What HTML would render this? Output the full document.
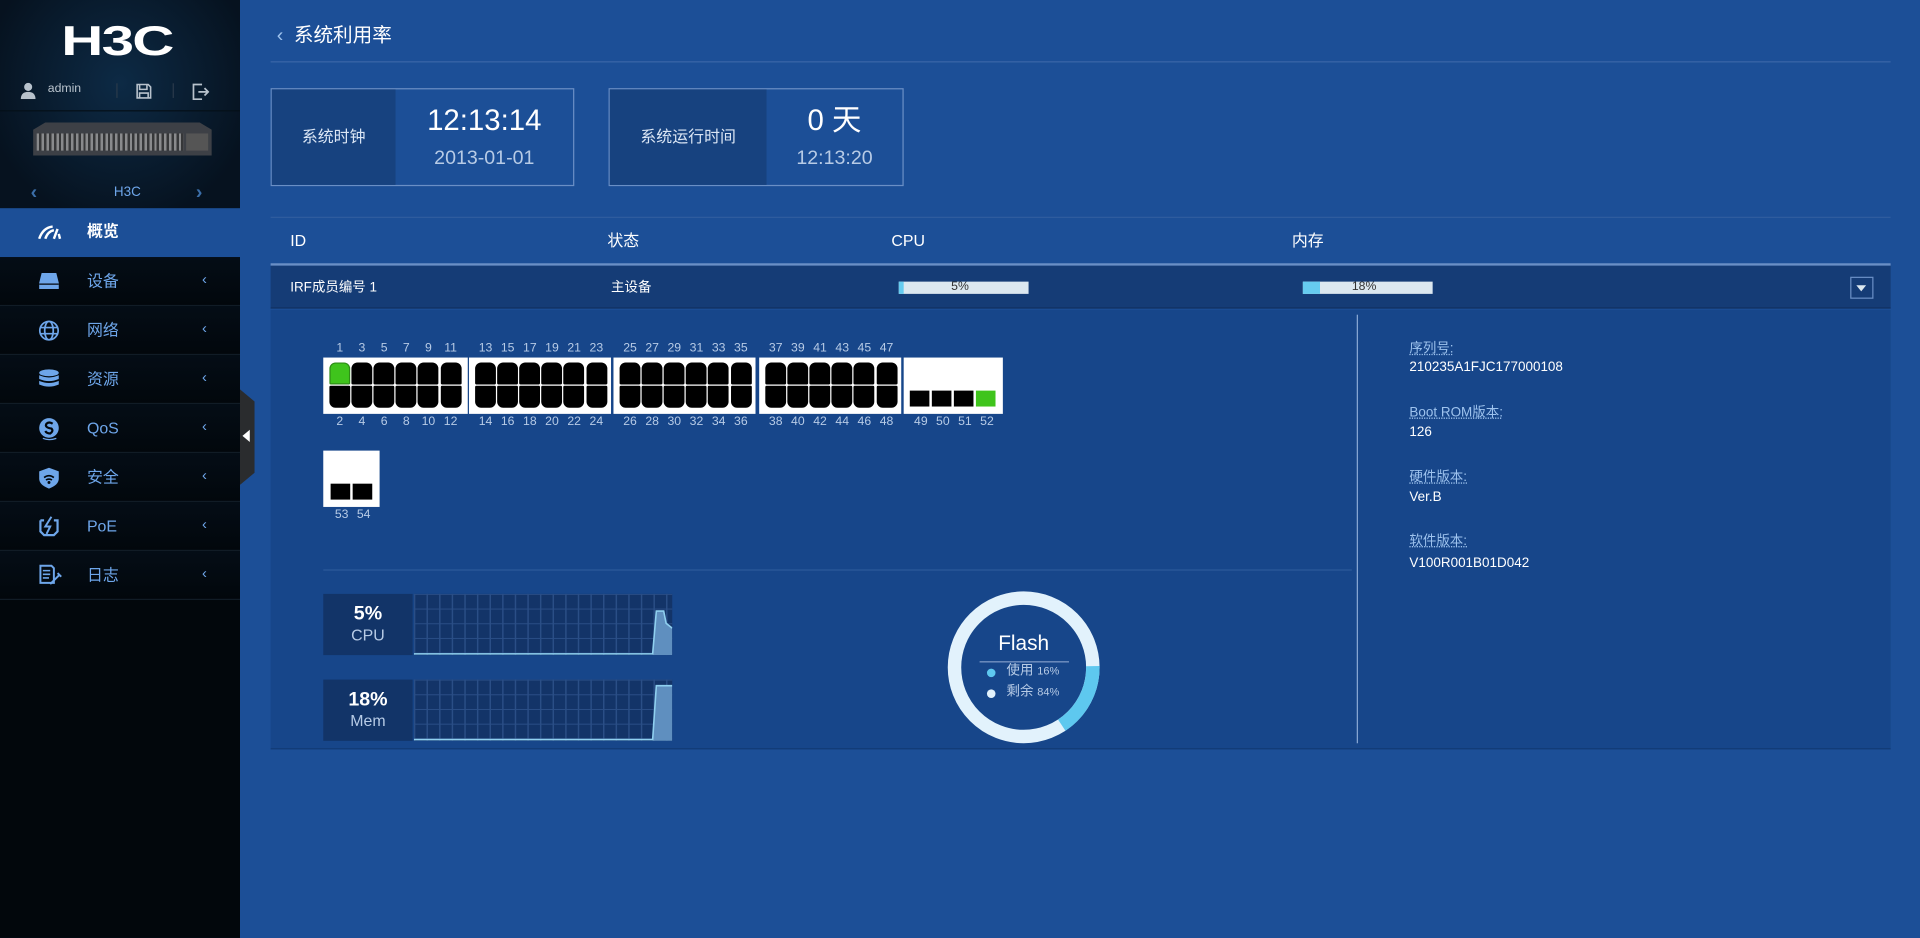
<!DOCTYPE html>
<html><head><meta charset="utf-8">
<style>
*{margin:0;padding:0;box-sizing:border-box}
html,body{width:1920px;height:938px;overflow:hidden;background:#1c4f97}
body{font-family:"Liberation Sans","Noto Sans CJK SC",sans-serif;color:#fff;line-height:1.2}
#w{position:absolute;left:0;top:0;width:1568px;height:766px;transform:scale(1.22449);transform-origin:0 0;background:#1c4f97}
.a{position:absolute}
#side{left:0;top:0;width:196px;height:766px;background:#02070c}
#top{left:0;top:0;width:196px;height:170px;background:radial-gradient(ellipse at 50% 40%,#0d2a45,#06121f 80%)}
.nav{position:absolute;left:0;width:196px;height:40px;border-bottom:1px solid #111c26;color:#6ea6ea;font-size:13px;background:linear-gradient(#040d16,#02070c)}
.nav .t{position:absolute;left:71px;top:12px}
.nav .c{position:absolute;left:165px;top:11px;font-size:12px}
.nav svg{position:absolute;left:31px;top:11px}
.card{border:1px solid #6a8fc5}
.lbl{color:#9ec3ee;font-size:11px;text-decoration:underline dotted}
.val{font-size:11px;color:#fff}
.blk{position:absolute;top:292px;height:46px;background:#fff;padding:4px 0 0 5px}
.p{position:absolute;width:17px;height:18px;background:#000;border-radius:5px 5px 1px 1px}
.p.b{border-radius:1px 1px 5px 5px}
.num{position:absolute;font-size:10px;color:#b7cbe6;width:18px;text-align:center}
.grid{background-color:#133468;background-image:linear-gradient(#2a4e86 1px,transparent 1px),linear-gradient(90deg,#2a4e86 1px,transparent 1px);background-size:10.3px 12px}
</style></head><body><div id="w">
<div id="side" class="a"></div>
<div id="top" class="a">
 <div class="a" style="left:50px;top:14px;font-size:34px;font-weight:bold;letter-spacing:-1px;transform:scaleX(1.4);transform-origin:0 0;line-height:40px">H3C</div>
 <svg class="a" style="left:16px;top:67px" width="14" height="14" viewBox="0 0 14 14"><circle cx="7" cy="4" r="3.3" fill="#b8c2cc"/><path d="M1 14 Q1 8 7 8 Q13 8 13 14Z" fill="#b8c2cc"/></svg>
 <div class="a" style="left:39px;top:67px;font-size:10px;color:#b8c2cc">admin</div>
 <div class="a" style="left:95px;top:68px;width:1px;height:12px;background:#2a3a4a"></div>
 <div class="a" style="left:141px;top:68px;width:1px;height:12px;background:#2a3a4a"></div>
 <svg class="a" style="left:111px;top:68px" width="13" height="13" viewBox="0 0 13 13"><path d="M1 1H10L12 3V12H1Z M3 1V5H9V1 M3 12V8H10V12" fill="none" stroke="#b8c2cc" stroke-width="1.3"/></svg>
 <svg class="a" style="left:157px;top:68px" width="14" height="14" viewBox="0 0 14 14"><path d="M8 1H1V13H8 M5 7H13 M10 4L13 7L10 10" fill="none" stroke="#b8c2cc" stroke-width="1.4"/></svg>
 <div class="a" style="left:27px;top:100px;width:146px;height:27px;background:#3d4046;clip-path:polygon(10px 0,136px 0,146px 6px,146px 27px,0 27px,0 6px)"></div>
 <div class="a" style="left:30px;top:109px;width:120px;height:14px;background:repeating-linear-gradient(90deg,#aaa 0 2px,#333 2px 4px);opacity:.7"></div>
 <div class="a" style="left:152px;top:109px;width:18px;height:14px;background:#555"></div>
 <div class="a" style="left:25px;top:148px;font-size:16px;color:#3b6ea8;font-weight:bold">&#8249;</div>
 <div class="a" style="left:160px;top:148px;font-size:16px;color:#3b6ea8;font-weight:bold">&#8250;</div>
 <div class="a" style="left:93px;top:151px;font-size:11px;color:#6ea6ea">H3C</div>
</div>
<div class="a" style="left:0;top:90px;width:196px;height:1px;background:#051019"></div>
<div class="a" style="left:0;top:170px;width:196px;height:40px;background:#1c4f97">
 <svg class="a" style="left:31px;top:13px" width="20" height="14" viewBox="0 0 20 14"><path d="M1 12Q4 3 12 2 M6 12Q8 6 13 5 M13 12L16 4 M18 12L17 8" fill="none" stroke="#fff" stroke-width="2"/></svg>
 <div class="a" style="left:71px;top:11px;font-size:13px;font-weight:bold">概览</div>
</div>
<div class="nav" style="top:210px"><svg width="18" height="16" viewBox="0 0 18 16"><path d="M3 2H15L17 10V15H1V10Z" fill="#6ea6ea"/><path d="M1 11H17" stroke="#02070c" stroke-width="1"/></svg><span class="t">设备</span><span class="c">&#8249;</span></div>
<div class="nav" style="top:250px"><svg width="18" height="18" viewBox="0 0 18 18"><g fill="none" stroke="#6ea6ea" stroke-width="1.4"><circle cx="9" cy="9" r="7.5"/><ellipse cx="9" cy="9" rx="3.5" ry="7.5"/><path d="M1.5 6.5H16.5M1.5 11.5H16.5"/></g></svg><span class="t">网络</span><span class="c">&#8249;</span></div>
<div class="nav" style="top:290px"><svg width="18" height="18" viewBox="0 0 18 18"><g fill="#6ea6ea"><ellipse cx="9" cy="3.5" rx="8" ry="2.8"/><path d="M1 5.5Q9 9 17 5.5V8.5Q9 12 1 8.5Z M1 10Q9 13.5 17 10V13Q9 16.5 1 13Z"/></g></svg><span class="t">资源</span><span class="c">&#8249;</span></div>
<div class="nav" style="top:330px"><svg width="18" height="19" viewBox="0 0 18 19"><circle cx="9" cy="8.5" r="8" fill="#6ea6ea"/><path d="M12 5Q9 3 7 5Q5 8 11 9Q13 11 10 13Q7 13 6 11" fill="none" stroke="#02070c" stroke-width="1.8"/><path d="M4 17Q9 19 15 17" stroke="#6ea6ea" fill="none"/></svg><span class="t">QoS</span><span class="c">&#8249;</span></div>
<div class="nav" style="top:370px"><svg width="18" height="19" viewBox="0 0 18 19"><path d="M9 1L17 4V10Q17 15 9 18Q1 15 1 10V4Z" fill="#6ea6ea"/><path d="M5 9Q9 6 13 9M6.5 11Q9 9.5 11.5 11" stroke="#02070c" fill="none" stroke-width="1.3"/><circle cx="9" cy="13" r="1.2" fill="#02070c"/></svg><span class="t">安全</span><span class="c">&#8249;</span></div>
<div class="nav" style="top:410px"><svg width="18" height="18" viewBox="0 0 18 18"><path d="M2 4H5M13 4H16V13L13 16H5L2 13V4" fill="none" stroke="#6ea6ea" stroke-width="1.8"/><path d="M11 1L6 9H10L7 15" fill="none" stroke="#6ea6ea" stroke-width="1.6"/></svg><span class="t">PoE</span><span class="c">&#8249;</span></div>
<div class="nav" style="top:450px"><svg width="20" height="18" viewBox="0 0 20 18"><path d="M2 1H11L13 3V15H2Z" fill="none" stroke="#6ea6ea" stroke-width="1.6"/><path d="M4 5H10M4 8H10M4 11H9" stroke="#6ea6ea" stroke-width="1.3"/><path d="M10 16L17 9M16 7L19 10" stroke="#6ea6ea" stroke-width="1.6"/></svg><span class="t">日志</span><span class="c">&#8249;</span></div>
<div class="a" style="left:196px;top:318px;width:12px;height:78px;background:#2a2c2e;clip-path:polygon(0 0,100% 10px,100% 68px,0 100%)"></div>
<div class="a" style="left:198px;top:351px;width:0;height:0;border-top:5px solid transparent;border-bottom:5px solid transparent;border-right:6px solid #fff"></div>

<div class="a" style="left:226px;top:20px;font-size:16px;color:#9ec3ee">&#8249;</div>
<div class="a" style="left:240px;top:20px;font-size:16px">系统利用率</div>
<div class="a" style="left:221px;top:50px;width:1323px;height:1px;background:#3a66a8"></div>

<div class="a card" style="left:221px;top:72px;width:248px;height:80px">
 <div class="a" style="left:0;top:0;width:101px;height:78px;background:#17427f;font-size:13px;color:#dbe6f5;text-align:center;line-height:78px">系统时钟</div>
 <div class="a" style="left:101px;top:12px;width:145px;text-align:center;font-size:24px">12:13:14</div>
 <div class="a" style="left:101px;top:47px;width:145px;text-align:center;font-size:16px;color:#b7cbe6">2013-01-01</div>
</div>
<div class="a card" style="left:497px;top:72px;width:241px;height:80px">
 <div class="a" style="left:0;top:0;width:128px;height:78px;background:#17427f;font-size:13px;color:#dbe6f5;text-align:center;line-height:78px">系统运行时间</div>
 <div class="a" style="left:128px;top:12px;width:111px;text-align:center;font-size:24px">0 天</div>
 <div class="a" style="left:128px;top:47px;width:111px;text-align:center;font-size:16px;color:#b7cbe6">12:13:20</div>
</div>

<div class="a" style="left:221px;top:177px;width:1323px;height:1px;background:#2f5d9f"></div>
<div class="a" style="left:237px;top:189px;font-size:13px">ID</div>
<div class="a" style="left:496px;top:189px;font-size:13px">状态</div>
<div class="a" style="left:728px;top:189px;font-size:13px">CPU</div>
<div class="a" style="left:1055px;top:189px;font-size:13px">内存</div>
<div class="a" style="left:221px;top:215px;width:1323px;height:2px;background:#6a8fc5"></div>
<div class="a" style="left:221px;top:217px;width:1323px;height:35px;background:#153c76;border-bottom:1px solid #123060"></div>
<div class="a" style="left:237px;top:229px;font-size:11px">IRF成员编号 1</div>
<div class="a" style="left:499px;top:229px;font-size:11px">主设备</div>
<div class="a" style="left:734px;top:230px;width:106px;height:10px;background:#dce8f0"><div style="width:4px;height:10px;background:#66ccf0"></div><div class="a" style="left:0;top:-1px;width:100px;text-align:center;font-size:10px;color:#333;line-height:12px">5%</div></div>
<div class="a" style="left:1064px;top:230px;width:106px;height:10px;background:#dce8f0"><div style="width:14px;height:10px;background:#66ccf0"></div><div class="a" style="left:0;top:-1px;width:100px;text-align:center;font-size:10px;color:#333;line-height:12px">18%</div></div>
<div class="a" style="left:1511px;top:226px;width:19px;height:18px;border:1px solid #6a8fc5"></div>
<div class="a" style="left:1516px;top:233px;border-left:4px solid transparent;border-right:4px solid transparent;border-top:5px solid #dce8f0"></div>

<div class="a" style="left:221px;top:253px;width:1323px;height:359px;background:#17468a;border-bottom:1px solid #123a74"></div>
<div class="a" style="left:1108px;top:257px;width:1px;height:350px;background:#8aa9d4"></div>
<div class="a" style="left:264px;top:465px;width:840px;height:1px;background:#2c5a9a"></div>
<div id="ports"></div>

<div class="a" style="left:264px;top:485px;width:73px;height:50px;background:#123468;text-align:center"><div style="font-size:16px;font-weight:bold;margin-top:7px">5%</div><div style="font-size:13px;color:#b7cbe6">CPU</div></div>
<div class="a grid" style="left:338px;top:485px;width:211px;height:50px"></div>
<svg class="a" style="left:338px;top:485px" width="211" height="50"><path d="M195 50L198 14H204L206 24L211 28V50Z" fill="#5f8fbf"/><path d="M0 49H195L198 14H204L206 24L211 28" fill="none" stroke="#8fd0f0" stroke-width="1.3"/></svg>
<div class="a" style="left:264px;top:555px;width:73px;height:50px;background:#123468;text-align:center"><div style="font-size:16px;font-weight:bold;margin-top:7px">18%</div><div style="font-size:13px;color:#b7cbe6">Mem</div></div>
<div class="a grid" style="left:338px;top:555px;width:211px;height:50px"></div>
<svg class="a" style="left:338px;top:555px" width="211" height="50"><path d="M195 50L198 5H211V50Z" fill="#5f8fbf"/><path d="M0 49H195L198 5H211" fill="none" stroke="#8fd0f0" stroke-width="1.3"/></svg>

<svg class="a" style="left:772px;top:481px" width="128" height="128" viewBox="0 0 128 128"><circle cx="64" cy="64" r="56.5" fill="none" stroke="#e2f2fc" stroke-width="11"/><circle cx="64" cy="64" r="56.5" fill="none" stroke="#5ec8ef" stroke-width="11" stroke-dasharray="56.8 400" transform="rotate(-1 64 64)"/></svg>
<div class="a" style="left:786px;top:516px;width:100px;text-align:center;font-size:17px">Flash</div>
<div class="a" style="left:800px;top:540px;width:73px;height:1px;background:#7f9cc8"></div>
<div class="a" style="left:806px;top:546px;width:7px;height:7px;border-radius:50%;background:#5ec8ef"></div>
<div class="a" style="left:822px;top:542px;font-size:11px;color:#b7cbe6">使用 <span style="font-size:9px">16%</span></div>
<div class="a" style="left:806px;top:563px;width:7px;height:7px;border-radius:50%;background:#e2f2fc"></div>
<div class="a" style="left:822px;top:559px;font-size:11px;color:#b7cbe6">剩余 <span style="font-size:9px">84%</span></div>

<div class="a lbl" style="left:1151px;top:279px">序列号:</div><div class="a val" style="left:1151px;top:294px">210235A1FJC177000108</div>
<div class="a lbl" style="left:1151px;top:331px">Boot ROM版本:</div><div class="a val" style="left:1151px;top:347px">126</div>
<div class="a lbl" style="left:1151px;top:384px">硬件版本:</div><div class="a val" style="left:1151px;top:400px">Ver.B</div>
<div class="a lbl" style="left:1151px;top:436px">软件版本:</div><div class="a val" style="left:1151px;top:454px">V100R001B01D042</div>
</div>
<script>
var h='',bx=[264,383,501,620];
for(var b=0;b<4;b++){var x0=bx[b];h+='<div class="blk" style="left:'+x0+'px;width:'+(b==0?118:116)+'px"></div>';
for(var i=0;i<6;i++){var x=x0+5+i*18.1,n=b*12+i*2+1;
h+='<div class="p" style="left:'+x+'px;top:296px;'+(n==1?'background:#3fc41c;border:1px solid #2e8d16':'')+'"></div>';
h+='<div class="p b" style="left:'+x+'px;top:315px"></div>';
h+='<div class="num" style="left:'+(x-0.5)+'px;top:279px">'+n+'</div>';
h+='<div class="num" style="left:'+(x-0.5)+'px;top:339px">'+(n+1)+'</div>';}}
h+='<div class="blk" style="left:738px;width:81px"></div>';
for(var j=0;j<4;j++){var x=743+j*18;h+='<div class="a" style="left:'+x+'px;top:319px;width:16px;height:13px;background:'+(j==3?'#3fc41c':'#000')+'"></div><div class="num" style="left:'+x+'px;top:339px">'+(49+j)+'</div>';}
h+='<div class="blk" style="left:264px;top:368px;width:46px"></div>';
for(var j=0;j<2;j++){var x=270+j*18;h+='<div class="a" style="left:'+x+'px;top:395px;width:16px;height:13px;background:#000"></div><div class="num" style="left:'+x+'px;top:415px">'+(53+j)+'</div>';}
document.getElementById('ports').innerHTML=h;
</script>
</body></html>
